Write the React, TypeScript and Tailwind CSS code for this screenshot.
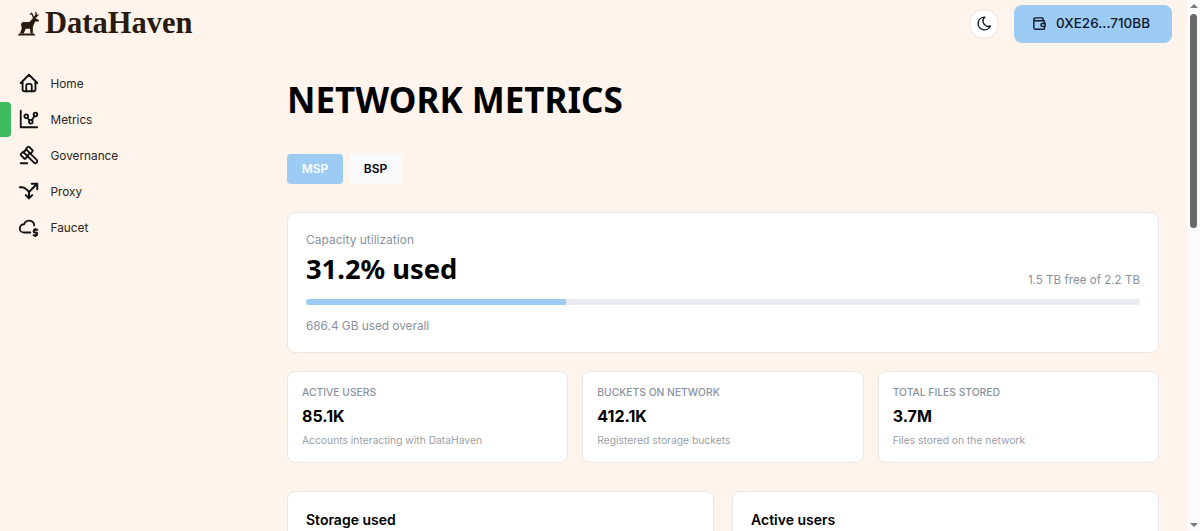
import React from 'react';
import { TbHome, TbChartDots, TbGavel, TbCloudDollar, TbMoon, TbWallet } from 'react-icons/tb';

const ProxyIcon = ({ className }: { className?: string }) => (
  <svg viewBox="0 0 24 24" fill="none" stroke="currentColor" strokeWidth={2.2} strokeLinecap="round" strokeLinejoin="round" className={className}>
    <path d="M2 8h2.5c2 0 3.5 1 5 2.5L12 13v7" />
    <path d="M8.5 16.5L12 20l3.5-3.5" />
    <path d="M12 13l8-8" />
    <path d="M15 4h6v6" />
  </svg>
);

const navItems = [
  { label: 'Home', icon: TbHome },
  { label: 'Metrics', icon: TbChartDots, active: true },
  { label: 'Governance', icon: TbGavel },
  { label: 'Proxy', icon: ProxyIcon },
  { label: 'Faucet', icon: TbCloudDollar },
];

const stats = [
  { label: 'ACTIVE USERS', value: '85.1K', note: 'Accounts interacting with DataHaven' },
  { label: 'BUCKETS ON NETWORK', value: '412.1K', note: 'Registered storage buckets' },
  { label: 'TOTAL FILES STORED', value: '3.7M', note: 'Files stored on the network' },
];

const Deer = () => (
  <svg viewBox="0 0 24 26" className="h-[25px] w-[23px] text-[#2a1a0e]" fill="currentColor">
    <path d="M0 25.5 L1 23.5 H17 L18 25.5 Z" />
    <path d="M2 23.5 L4 18 L3 13.5 L5 11.5 L12 11.5 L14.5 8.5 L17 6.5 L22 9.5 L21.5 11 L18 11 L16.5 14 L15.5 17 L15.5 23.5 L13 23.5 L12.5 18.5 L8 18.5 L6 23.5 Z" />
    <path d="M15.5 7.5 L14.5 4 L12 3.5 L12.5 2.5 L14 2.5 L13.5 0.5 L15.5 3 L16.5 6 L18 4 L18 0.5 L19.5 1.5 L19.5 4 L22 3 L21 5 L18 7.5 Z" />
  </svg>
);

const App = () => {
  return (
    <div className="flex h-[531px] overflow-hidden bg-[#fef4eb] font-['Inter',sans-serif] text-black">
      <div className="min-w-0 flex-1">
        <header className="flex h-[48px] items-center justify-between pl-[18px] pr-[15px]">
          <div className="-mt-[2px] flex items-center gap-[4px]">
            <Deer />
            <span className="font-['Liberation_Serif',serif] text-[30.5px] font-bold leading-none text-[#2a1a0e]">DataHaven</span>
          </div>
          <div className="-mt-[1px] flex items-center gap-[15px]">
            <button className="flex h-[30px] w-[30px] items-center justify-center rounded-full border border-[#e8e4e0] bg-white">
              <TbMoon className="h-[17px] w-[17px] text-[#111827]" />
            </button>
            <button className="flex h-[38px] w-[158px] items-center gap-[8px] rounded-[8px] bg-[#9ccbf3] pl-[17px] text-[13.5px] font-medium text-[#0f172a]">
              <TbWallet className="h-[17px] w-[17px]" />
              0XE26...710BB
            </button>
          </div>
        </header>

        <div className="flex">
          <aside className="w-[287px] shrink-0 pt-[17px]">
            <nav className="flex flex-col">
              {navItems.map(({ label, icon: Icon, active }) => (
                <div key={label} className="flex h-9 items-center">
                  <div className={`h-[35px] w-[11px] rounded-r-[4px] ${active ? 'bg-[#3dbb5d]' : ''}`}></div>
                  <Icon className="ml-[7px] h-[22px] w-[22px] text-[#111]" />
                  <span className="ml-[10.5px] mt-[3px] text-[11.8px] text-[#2a2520]">{label}</span>
                </div>
              ))}
            </nav>
          </aside>

          <main className="min-w-0 flex-1 pr-[28px]">
            <h1 className="mt-[28px] font-['Noto_Sans',sans-serif] text-[35px] font-bold leading-[48px]">NETWORK METRICS</h1>

            <div className="mt-[30px] flex gap-[6px] text-[12px] font-semibold">
              <button className="h-[30px] w-[56px] rounded-[4px] bg-[#9ccbf3] text-white">MSP</button>
              <button className="h-[30px] w-[53px] rounded-[4px] bg-[#f8fafc] text-black">BSP</button>
            </div>

            <section className="mt-[28px] h-[141px] rounded-[8px] border border-[#e9e6e3] bg-white px-[18px] pt-[20px]">
              <div className="text-[12px] leading-[14px] text-[#8a929e]">Capacity utilization</div>
              <div className="mt-[3px] flex items-end justify-between">
                <div className="font-['Noto_Sans',sans-serif] text-[27.3px] font-bold leading-[38px]">31.2% used</div>
                <div className="mb-[1px] text-[11.6px] leading-[14px] text-[#8a929e]">1.5 TB free of 2.2 TB</div>
              </div>
              <div className="mt-[11px] h-[6px] overflow-hidden rounded-full bg-[#e8ebf0]">
                <div className="h-full w-[31.2%] bg-[#9ccbf3]"></div>
              </div>
              <div className="mt-[14px] text-[11.8px] leading-[14px] text-[#8a929e]">686.4 GB used overall</div>
            </section>

            <div className="mt-[18px] grid grid-cols-3 gap-[14px]">
              {stats.map((s) => (
                <div key={s.label} className="h-[92px] rounded-[8px] border border-[#e9e6e3] bg-white px-[14px] pt-[14px]">
                  <div className="text-[10.3px] font-medium leading-[13px] text-[#8a929e]">{s.label}</div>
                  <div className="mt-[5px] text-[16px] font-bold leading-[24px]">{s.value}</div>
                  <div className="mt-[6px] text-[10.3px] leading-[13px] text-[#9aa0a9]">{s.note}</div>
                </div>
              ))}
            </div>

            <div className="mt-[28px] grid grid-cols-2 gap-[18px]">
              {['Storage used', 'Active users'].map((t) => (
                <div key={t} className="h-[200px] rounded-[8px] border border-[#e9e6e3] bg-white px-[18px] pt-[18px]">
                  <h2 className="text-[14px] font-semibold leading-[20px]">{t}</h2>
                </div>
              ))}
            </div>
          </main>
        </div>
      </div>

      {/* scrollbar */}
      <div className="flex w-[13px] shrink-0 flex-col items-center bg-[#fbfbfb]">
        <div className="mt-[4px] h-0 w-0 border-x-[4px] border-b-[4px] border-x-transparent border-b-[#7a7a7a]"></div>
        <div className="mt-[6px] h-[214px] w-[7px] rounded-full bg-[#686868]"></div>
        <div className="mb-[4px] mt-auto h-0 w-0 border-x-[4px] border-t-[4px] border-x-transparent border-t-[#7a7a7a]"></div>
      </div>
    </div>
  );
};

export default App;
